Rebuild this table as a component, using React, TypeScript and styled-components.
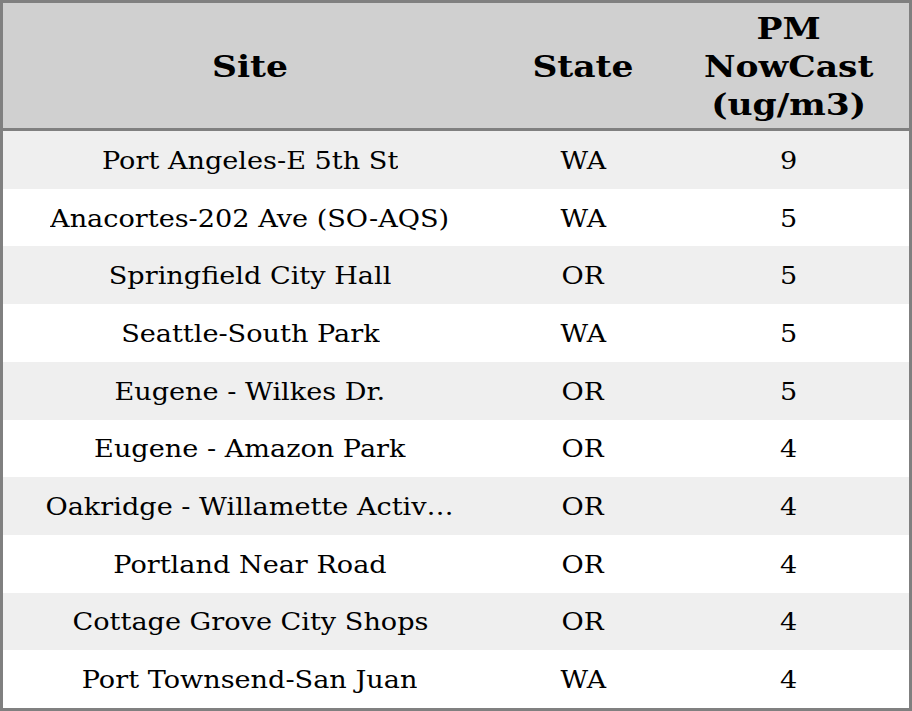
import React from "react";
import styled, { createGlobalStyle } from "styled-components";

const Global = createGlobalStyle`
  html, body { margin: 0; padding: 0; background: #ffffff; }
  body { font-family: "DejaVu Serif", serif; color: #000; }
`;

const Table = styled.div`
  box-sizing: border-box;
  width: 912px;
  height: 711px;
  border: 3px solid #808080;
  display: grid;
  grid-template-columns: 494px 172px 1fr;
  grid-template-rows: 128px repeat(10, 1fr);
  background: #ffffff;
`;

const HeadCell = styled.div`
  box-sizing: border-box;
  background: #d0d0d0;
  border-bottom: 3px solid #808080;
  padding-top: 2px;
  display: flex;
  align-items: center;
  justify-content: center;
  text-align: center;
  font-family: "DejaVu Serif", serif;
  font-weight: bold;
  font-size: 30px;
  line-height: 38px;
`;

const HeadLabel = styled.span`
  display: inline-block;
  transform: scaleX(1.15);
`;

const Cell = styled.div<{ $striped: boolean }>`
  box-sizing: border-box;
  background: ${(p) => (p.$striped ? "#efefef" : "#ffffff")};
  padding-top: 2px;
  display: flex;
  align-items: center;
  justify-content: center;
  min-width: 0;
  font-family: "DejaVu Serif", serif;
  font-size: 24px;
`;

const Label = styled.span`
  display: inline-block;
  max-width: 362px;
  white-space: nowrap;
  overflow: hidden;
  text-overflow: ellipsis;
  transform: scaleX(1.13);
`;

const rows: [string, string, number][] = [
  ["Port Angeles-E 5th St", "WA", 9],
  ["Anacortes-202 Ave (SO-AQS)", "WA", 5],
  ["Springfield City Hall", "OR", 5],
  ["Seattle-South Park", "WA", 5],
  ["Eugene - Wilkes Dr.", "OR", 5],
  ["Eugene - Amazon Park", "OR", 4],
  ["Oakridge - Willamette Activity Center", "OR", 4],
  ["Portland Near Road", "OR", 4],
  ["Cottage Grove City Shops", "OR", 4],
  ["Port Townsend-San Juan", "WA", 4],
];

export default function App() {
  return (
    <>
      <Global />
      <Table>
        <HeadCell>
          <HeadLabel>Site</HeadLabel>
        </HeadCell>
        <HeadCell>
          <HeadLabel>State</HeadLabel>
        </HeadCell>
        <HeadCell>
          <HeadLabel>
            PM
            <br />
            NowCast
            <br />
            (ug/m3)
          </HeadLabel>
        </HeadCell>
        {rows.map(([site, state, pm], i) => (
          <React.Fragment key={site}>
            <Cell $striped={i % 2 === 0}>
              <Label>{site}</Label>
            </Cell>
            <Cell $striped={i % 2 === 0}>
              <Label>{state}</Label>
            </Cell>
            <Cell $striped={i % 2 === 0}>
              <Label>{pm}</Label>
            </Cell>
          </React.Fragment>
        ))}
      </Table>
    </>
  );
}
